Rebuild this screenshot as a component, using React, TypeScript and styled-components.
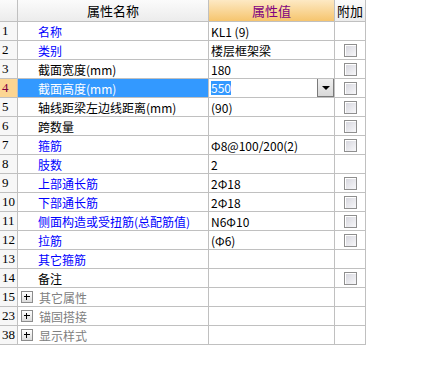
import * as React from "react";
import styled, { createGlobalStyle } from "styled-components";

type Tone = "blue" | "black" | "gray";

interface PropRow {
  index: number;
  name: string;
  value?: string;
  tone: Tone;
  extra?: boolean;
  group?: boolean;
  selected?: boolean;
}

const rows: PropRow[] = [
  { index: 1, name: "名称", value: "KL1 (9)", tone: "blue" },
  { index: 2, name: "类别", value: "楼层框架梁", tone: "blue", extra: true },
  { index: 3, name: "截面宽度(mm)", value: "180", tone: "black", extra: true },
  { index: 4, name: "截面高度(mm)", value: "550", tone: "blue", extra: true, selected: true },
  { index: 5, name: "轴线距梁左边线距离(mm)", value: "(90)", tone: "black", extra: true },
  { index: 6, name: "跨数量", tone: "black", extra: true },
  { index: 7, name: "箍筋", value: "Φ8@100/200(2)", tone: "blue", extra: true },
  { index: 8, name: "肢数", value: "2", tone: "blue" },
  { index: 9, name: "上部通长筋", value: "2Φ18", tone: "blue", extra: true },
  { index: 10, name: "下部通长筋", value: "2Φ18", tone: "blue", extra: true },
  { index: 11, name: "侧面构造或受扭筋(总配筋值)", value: "N6Φ10", tone: "blue", extra: true },
  { index: 12, name: "拉筋", value: "(Φ6)", tone: "blue", extra: true },
  { index: 13, name: "其它箍筋", tone: "blue" },
  { index: 14, name: "备注", tone: "black", extra: true },
  { index: 15, name: "其它属性", tone: "gray", group: true },
  { index: 23, name: "锚固搭接", tone: "gray", group: true },
  { index: 38, name: "显示样式", tone: "gray", group: true },
];

const toneColor: Record<Tone, string> = {
  blue: "#0000ff",
  black: "#000000",
  gray: "#808080",
};

const GlobalStyle = createGlobalStyle`
  html, body {
    margin: 0;
    padding: 0;
    background: #ffffff;
  }
  body {
    font-family: "Noto Sans CJK SC", "Liberation Sans", sans-serif;
    font-size: 12px;
  }
`;

const Grid = styled.div`
  width: 366px;
  display: flex;
  flex-direction: column;
`;

const Row = styled.div<{ $header?: boolean }>`
  display: flex;
  height: ${(p) => (p.$header ? 22 : 19)}px;
  box-sizing: border-box;
  border-bottom: 1px solid #c0c0c0;
`;

const Cell = styled.div<{ $width: number }>`
  width: ${(p) => p.$width}px;
  flex: none;
  box-sizing: border-box;
  border-right: 1px solid #c0c0c0;
  display: flex;
  align-items: center;
  overflow: hidden;
  white-space: nowrap;
  position: relative;
`;

const HeadCell = styled(Cell)<{ $accent?: boolean }>`
  justify-content: center;
  font-size: 13px;
  color: ${(p) => (p.$accent ? "#800080" : "#000000")};
  background: ${(p) =>
    p.$accent
      ? "linear-gradient(#fde9c4, #f6c56e)"
      : "linear-gradient(#fbfbfb, #ececec)"};
`;

const IndexCell = styled(Cell)<{ $selected?: boolean }>`
  padding-left: 2px;
  font-family: "Liberation Serif", serif;
  font-size: 13px;
  color: ${(p) => (p.$selected ? "#800040" : "#000000")};
  background: ${(p) => (p.$selected ? "#fcd592" : "#f7f7f7")};
`;

const NameCell = styled(Cell)<{ $tone: Tone; $selected?: boolean; $group?: boolean }>`
  padding-left: ${(p) => (p.$group ? 2 : 20)}px;
  gap: 6px;
  color: ${(p) => (p.$selected ? "#ffffff" : toneColor[p.$tone])};
  background: ${(p) => (p.$selected ? "#3399ff" : "#ffffff")};
`;

const ValueCell = styled(Cell)`
  padding-left: 2px;
  color: #000000;
`;

const ExtraCell = styled(Cell)`
  justify-content: center;
`;

const Selection = styled.span`
  background: #3399ff;
  color: #ffffff;
  line-height: 14px;
`;

const DropButton = styled.div`
  position: absolute;
  right: 0;
  top: -1px;
  width: 17px;
  height: 19px;
  box-sizing: border-box;
  border: 1px solid #7a7a7a;
  background: linear-gradient(#f0f0f0, #d8d8d8);
  display: flex;
  align-items: center;
  justify-content: center;
`;

const Arrow = styled.span`
  width: 0;
  height: 0;
  border-left: 4px solid transparent;
  border-right: 4px solid transparent;
  border-top: 4px solid #000000;
  margin-top: 1px;
`;

const CheckBox = styled.span`
  width: 13px;
  height: 13px;
  box-sizing: border-box;
  border: 1px solid #8f8f8f;
  background: linear-gradient(135deg, #d4d4dc, #f8f8fa);
  box-shadow: inset 1px 1px 0 #ffffff;
`;

const PlusBox = styled.span`
  width: 12px;
  height: 12px;
  margin-left: 1px;
  box-sizing: border-box;
  border: 1px solid #8c8c8c;
  background: linear-gradient(#ffffff, #dcdcdc);
  position: relative;
  flex: none;

  &::before,
  &::after {
    content: "";
    position: absolute;
    background: #000000;
  }
  &::before {
    left: 2px;
    right: 2px;
    top: 4px;
    height: 1px;
  }
  &::after {
    top: 2px;
    bottom: 2px;
    left: 4px;
    width: 1px;
  }
`;

const widths = { index: 18, name: 191, value: 126, extra: 31 };

export default function App() {
  return (
    <>
      <GlobalStyle />
      <Grid>
        <Row $header>
          <HeadCell $width={widths.index} />
          <HeadCell $width={widths.name}>属性名称</HeadCell>
          <HeadCell $width={widths.value} $accent>
            属性值
          </HeadCell>
          <HeadCell $width={widths.extra}>附加</HeadCell>
        </Row>
        {rows.map((r) => (
          <Row key={r.index}>
            <IndexCell $width={widths.index} $selected={r.selected}>
              {r.index}
            </IndexCell>
            <NameCell
              $width={widths.name}
              $tone={r.tone}
              $selected={r.selected}
              $group={r.group}
            >
              {r.group && <PlusBox />}
              {r.name}
            </NameCell>
            <ValueCell $width={widths.value}>
              {r.selected ? (
                <>
                  <Selection>{r.value}</Selection>
                  <DropButton>
                    <Arrow />
                  </DropButton>
                </>
              ) : (
                r.value
              )}
            </ValueCell>
            <ExtraCell $width={widths.extra}>{r.extra && <CheckBox />}</ExtraCell>
          </Row>
        ))}
      </Grid>
    </>
  );
}
